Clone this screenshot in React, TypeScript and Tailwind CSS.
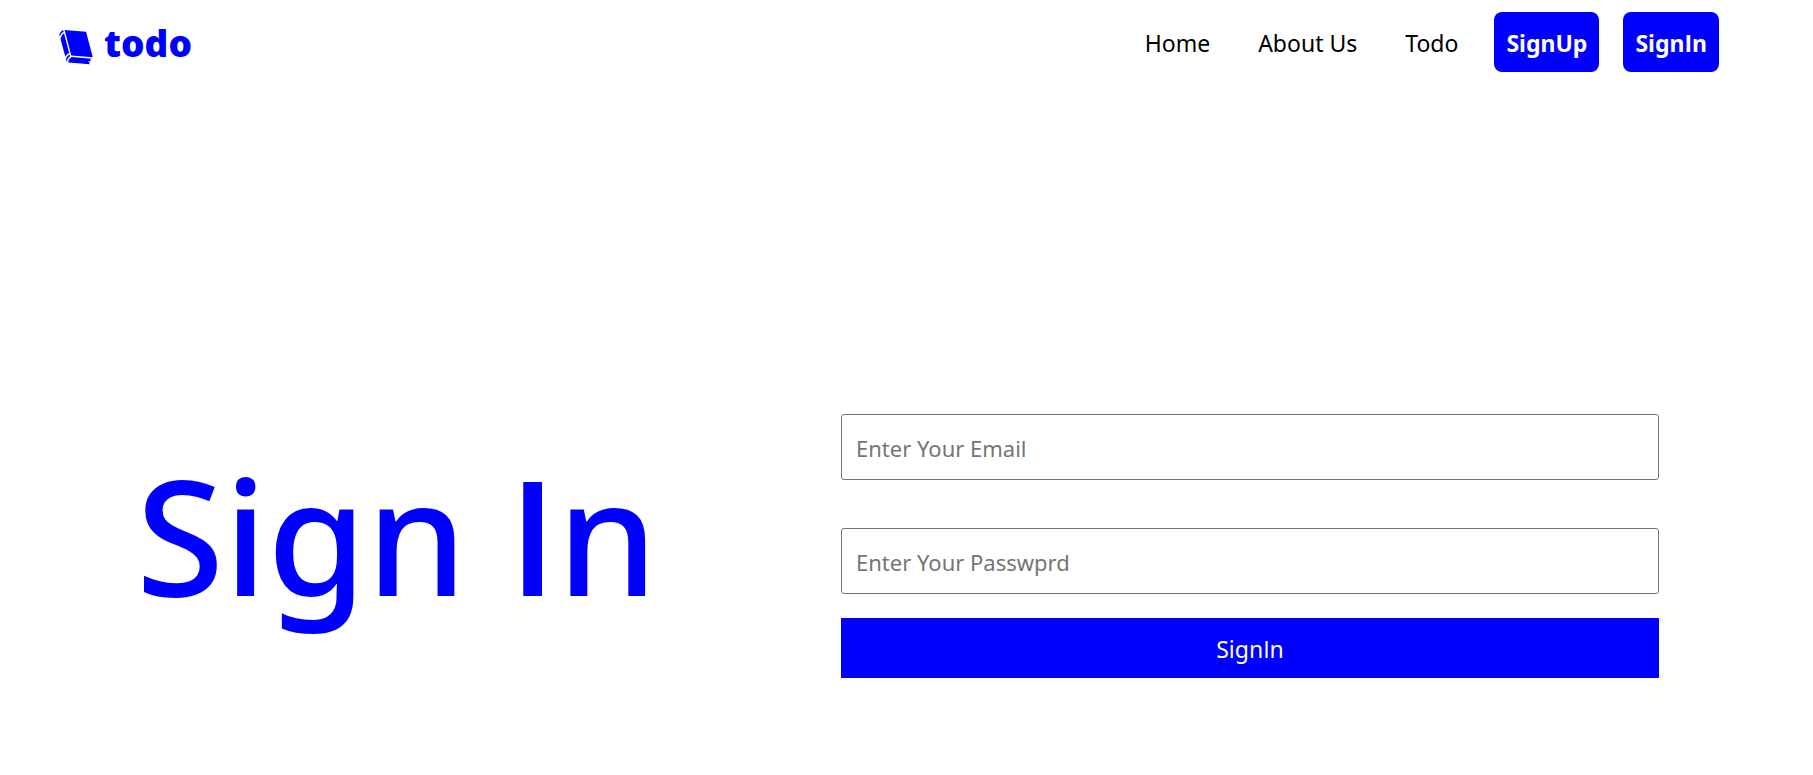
import { GiWhiteBook } from "react-icons/gi";

const links = ["Home", "About Us", "Todo"];

const fieldClass =
  "h-[66px] w-full rounded-[3px] border border-[#767676] bg-white px-[14px] pt-0.5 text-[22px] text-black outline-none placeholder:text-[#757575]";

const authLinkClass = "rounded-lg bg-[#0000ff] px-3 pt-[13px] pb-[11px] font-bold text-white";

/* Capital I without serifs */
function PlainI({ className = "" }: { className?: string }) {
  return <span className={`font-['Open_Sans',sans-serif] ${className}`}>I</span>;
}

function Navbar() {
  return (
    <header className="flex items-center justify-between py-3 pr-[94px] pl-[57px]">
      <a href="#" className="flex items-center gap-[9px] pt-0.5 text-[37px] leading-[58px] font-black text-[#0000ff]">
        <GiWhiteBook className="mt-2 size-[38px]" aria-hidden="true" />
        <span>todo</span>
      </a>
      <nav className="flex items-center gap-6 text-[23px] leading-9">
        <ul className="flex items-center gap-12 pt-0.5 pr-3">
          {links.map((link) => (
            <li key={link}>
              <a href="#">{link}</a>
            </li>
          ))}
        </ul>
        <a href="#" className={authLinkClass}>
          SignUp
        </a>
        <a href="#" className={authLinkClass}>
          Sign<PlainI />n
        </a>
      </nav>
    </header>
  );
}

export default function App() {
  return (
    <div className="min-h-screen bg-white font-['Noto_Sans','Open_Sans',sans-serif] text-black">
      <Navbar />
      <main className="grid grid-cols-[705fr_818fr] items-center pt-[330px] pr-[154px] pl-[136px]">
        <h1 className="pb-6 text-[160px] leading-[192px] font-medium whitespace-nowrap text-[#0000ff]">
          Sign <PlainI className="font-semibold" />n
        </h1>
        <form className="flex flex-col" onSubmit={(event) => event.preventDefault()}>
          <input type="email" aria-label="Email" placeholder="Enter Your Email" className={fieldClass} />
          <input
            type="password"
            aria-label="Password"
            placeholder="Enter Your Passwprd"
            className={`mt-12 ${fieldClass}`}
          />
          <button type="submit" className="mt-6 h-[60px] bg-[#0000ff] pt-0.5 text-[23px] text-white">
            Sign<PlainI />n
          </button>
        </form>
      </main>
    </div>
  );
}
